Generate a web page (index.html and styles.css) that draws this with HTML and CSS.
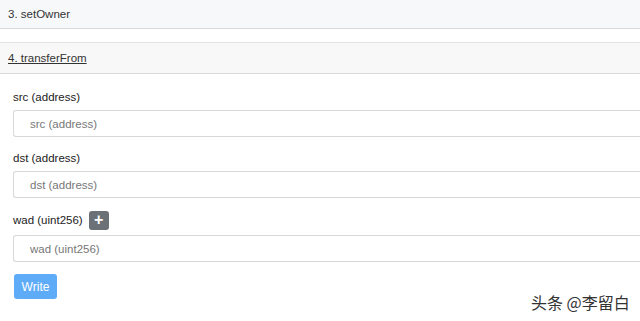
FILE: index.html
```html
<!DOCTYPE html>
<html>
<head>
<meta charset="utf-8">
<link rel="stylesheet" href="styles.css">
</head>
<body>
<div class="page">
  <div class="card card--top">
    <div class="card-header card-header--blue">3. setOwner</div>
  </div>
  <div class="card">
    <div class="card-header"><a class="fn-link">4. transferFrom</a></div>
    <div class="card-body">
      <div class="form-group">
        <div class="label-row">src (address)</div>
        <div class="input">src (address)</div>
      </div>
      <div class="form-group">
        <div class="label-row">dst (address)</div>
        <div class="input">dst (address)</div>
      </div>
      <div class="form-group">
        <div class="label-row label-row--btn">wad (uint256) <span class="plus-btn">+</span></div>
        <div class="input">wad (uint256)</div>
      </div>
      <button class="write-btn">Write</button>
    </div>
  </div>
  <div class="watermark">头条 @李留白</div>
</div>
</body>
</html>
```
FILE: styles.css
```css
* { box-sizing: border-box; }
html, body { margin: 0; padding: 0; background: #fff; overflow: hidden; }
body {
  font-family: "Liberation Sans", Arial, sans-serif;
  font-size: 11.5px;
  color: #333;
  width: 640px;
  height: 321px;
}
.page { position: relative; width: 640px; height: 321px; }
.card { display: flex; flex-direction: column; }
.card--top { margin-bottom: 13px; }
.card-header {
  display: flex;
  align-items: center;
  height: 32px;
  padding-left: 8px;
  background: #f8f8f8;
  border-top: 1px solid #e2e2e2;
  border-bottom: 1px solid #dadada;
  color: #333;
}
.card-header--blue {
  height: 29px;
  background: #f7f8fa;
  border-top: none;
  border-bottom: 1px solid #d8d9dc;
}
.fn-link { color: #333; text-decoration: underline; }
.card-body { padding: 13px 0 0 13px; display: flex; flex-direction: column; align-items: flex-start; }
.form-group { width: 100%; display: flex; flex-direction: column; margin-bottom: 11px; }
.label-row {
  display: flex;
  align-items: center;
  gap: 6px;
  height: 20px;
  margin-bottom: 3px;
  color: #222;
}
.label-row--btn { margin-bottom: 5px; margin-top: 1px; }
.plus-btn {
  display: inline-flex;
  align-items: center;
  justify-content: center;
  width: 20px;
  height: 19px;
  background: #6c7177;
  color: #fff;
  border-radius: 3px;
  font-weight: bold;
  font-size: 16px;
  line-height: 1;
}
.input {
  width: 100%;
  height: 27px;
  display: flex;
  align-items: center;
  padding-left: 16px;
  border: 1px solid #d6d8da;
  border-right: none;
  border-radius: 3px 0 0 3px;
  color: #777;
  background: #fff;
}
.write-btn {
  margin-top: 1px;
  margin-left: 1px;
  width: 43px;
  height: 25px;
  border: none;
  border-radius: 3px;
  background: #5eabf8;
  color: #fff;
  font-family: "Liberation Sans", Arial, sans-serif;
  font-size: 12px;
  padding: 0;
}
.watermark {
  position: absolute;
  left: 531px;
  top: 292px;
  font-family: "Noto Sans CJK SC", sans-serif;
  font-size: 16px;
  line-height: 20px;
  color: #333;
  white-space: nowrap;
}
```
